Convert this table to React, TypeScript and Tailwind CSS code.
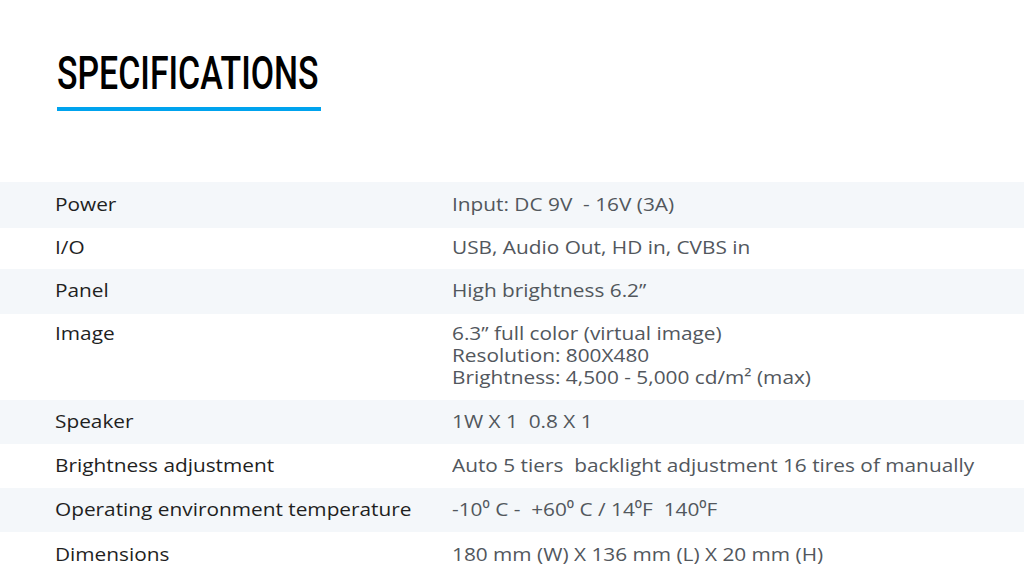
import React from "react";

const rows: { label: string; value: string[]; h: string; bg: boolean; top?: boolean }[] = [
  { label: "Power", value: ["Input: DC 9V  - 16V (3A)"], h: "h-[46px]", bg: true },
  { label: "I/O", value: ["USB, Audio Out, HD in, CVBS in"], h: "h-[41px]", bg: false },
  { label: "Panel", value: ["High brightness 6.2\u201D"], h: "h-[45px]", bg: true },
  {
    label: "Image",
    value: [
      "6.3\u201D full color (virtual image)",
      "Resolution: 800X480",
      "Brightness: 4,500 - 5,000 cd/m\u00B2 (max)",
    ],
    h: "h-[86px]",
    bg: false,
    top: true,
  },
  { label: "Speaker", value: ["1W X 1  0.8 X 1"], h: "h-[44px]", bg: true },
  { label: "Brightness adjustment", value: ["Auto 5 tiers  backlight adjustment 16 tires of manually"], h: "h-[44px]", bg: false },
  { label: "Operating environment temperature", value: ["-10\u2070 C -  +60\u2070 C / 14\u2070F  140\u2070F"], h: "h-[44px]", bg: true },
  { label: "Dimensions", value: ["180 mm (W) X 136 mm (L) X 20 mm (H)"], h: "h-[46px]", bg: false },
];

export default function App() {
  return (
    <div className="w-[1024px] h-[578px] bg-white overflow-hidden" style={{ fontFamily: '"Open Sans", "Noto Sans", sans-serif' }}>
      <div className="pl-[57px] pt-[47px] h-[182px]">
        <div className="h-[52px] leading-[52px] whitespace-nowrap">
          <span
            className="inline-block origin-left scale-x-[0.72] text-[47px] font-medium text-black"
            style={{ fontFamily: 'Roboto, "Liberation Sans", sans-serif' }}
          >
            SPECIFICATIONS
          </span>
        </div>
        <div className="mt-[8px] h-[4px] w-[264px] bg-[#00a3ee]" />
      </div>
      <div className="flex flex-col">
        {rows.map((r) => (
          <div
            key={r.label}
            className={`${r.h} ${r.bg ? "bg-[#f4f7fa]" : "bg-white"} grid grid-cols-[397px_1fr] ${r.top ? "items-start pt-[8px]" : "items-center pb-[3px]"} pl-[55px] text-[18.5px] leading-[22px]`}
          >
            <div className="text-[#1f1f1f] whitespace-pre origin-left scale-x-[1.125]">{r.label}</div>
            <div className="text-[#52575d] whitespace-pre origin-left scale-x-[1.125]">
              {r.value.map((v, i) => (
                <React.Fragment key={v}>
                  {i > 0 && <br />}
                  {v}
                </React.Fragment>
              ))}
            </div>
          </div>
        ))}
      </div>
    </div>
  );
}
